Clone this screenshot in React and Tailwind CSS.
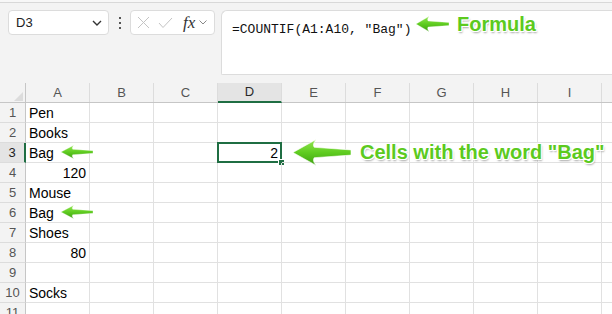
import React from "react";

function Arrow({ id, className }) {
  return (
    <svg className={className} viewBox="0 0 60 26" preserveAspectRatio="none">
      <defs>
        <linearGradient id={id} x1="0" y1="0" x2="0" y2="1">
          <stop offset="0" stopColor="#93e552" />
          <stop offset="0.5" stopColor="#5fcc20" />
          <stop offset="1" stopColor="#3e9f12" />
        </linearGradient>
      </defs>
      <path
        d="M0 13 L24 0.5 C21 4 20.5 6 22 8 L60 10.5 L60 15.5 L22 18 C20.5 20 21 22 24 25.5 Z"
        fill={`url(#${id})`}
        stroke="#ffffff"
        strokeWidth="0.6"
      />
    </svg>
  );
}

const cols = ["A", "B", "C", "D", "E", "F", "G", "H", "I", "J"];
const data = {
  1: { A: ["Pen", "l"] },
  2: { A: ["Books", "l"] },
  3: { A: ["Bag", "l"], D: ["2", "r"] },
  4: { A: ["120", "r"] },
  5: { A: ["Mouse", "l"] },
  6: { A: ["Bag", "l"] },
  7: { A: ["Shoes", "l"] },
  8: { A: ["80", "r"] },
  9: {},
  10: { A: ["Socks", "l"] },
  11: {},
};

const shadow =
  "[text-shadow:0_0_1px_#fff,1px_1px_0_#fff,-1px_-1px_0_#fff,1px_-1px_0_#fff,-1px_1px_0_#fff,0_1px_0_#fff,0_-1px_0_#fff,1px_0_0_#fff,-1px_0_0_#fff,1px_2px_2px_rgba(0,0,0,0.35)]";

export default function App() {
  const rows = [1, 2, 3, 4, 5, 6, 7, 8, 9, 10, 11];
  return (
    <div className="relative w-[612px] h-[314px] overflow-hidden bg-white font-['Liberation_Sans',Arial,sans-serif] text-black">
      {/* top strip */}
      <div className="h-[2px] bg-[#f7f7f7]" />
      <div className="h-[81px] bg-[#f3f3f3] border-t border-[#d8d8d8] pt-[7px] pl-[8px] flex items-start">
        {/* name box */}
        <div className="w-[101px] h-[25px] bg-white border border-[#dcdcdc] rounded-[4px] flex items-center pl-[7px] pr-[6px]">
          <span className="text-[13px] text-[#222] flex-1">D3</span>
          <svg width="10" height="6" viewBox="0 0 10 6" className="mt-[1px]">
            <path d="M1 1 L5 5 L9 1" fill="none" stroke="#333" strokeWidth="1.4" />
          </svg>
        </div>
        {/* dots */}
        <div className="w-[21px] h-[25px] flex flex-col items-center justify-center gap-[3px]">
          <div className="w-[2px] h-[2px] bg-[#555]" />
          <div className="w-[2px] h-[2px] bg-[#555]" />
          <div className="w-[2px] h-[2px] bg-[#555]" />
        </div>
        {/* fx box */}
        <div className="w-[85px] h-[25px] bg-white border border-[#dcdcdc] rounded-[4px] flex items-center pl-[6px]">
          <svg width="13" height="13" viewBox="0 0 13 13">
            <path d="M1 1 L12 12 M12 1 L1 12" stroke="#c4c4c4" strokeWidth="1" fill="none" />
          </svg>
          <svg width="15" height="12" viewBox="0 0 15 12" className="ml-[8px]">
            <path d="M1 6 L5 10.5 L14 1" stroke="#c4c4c4" strokeWidth="1" fill="none" />
          </svg>
          <span className="ml-[10px] font-['Liberation_Serif',serif] italic text-[17px] leading-none text-[#333]">fx</span>
          <svg width="8" height="5" viewBox="0 0 8 5" className="ml-[4px]">
            <path d="M0.5 0.5 L4 4 L7.5 0.5" stroke="#888" strokeWidth="1" fill="none" />
          </svg>
        </div>
        {/* formula input */}
        <div className="ml-[6px] flex-1 h-[65px] bg-white border-l border-t border-b border-[#dcdcdc] rounded-tl-[6px] rounded-bl-[2px] pl-[10px] pt-[5px]">
          <span className="font-['Liberation_Mono',monospace] text-[13px] leading-[18px] text-[#111]">
            =COUNTIF(A1:A10, "Bag")
          </span>
        </div>
      </div>

      {/* column header */}
      <div className="flex h-[20px] bg-[#f3f3f3] border-b border-[#c6c6c6]">
        <div className="w-[26px] shrink-0 border-r border-[#c6c6c6] flex items-end justify-end pr-[2px] pb-[1px]">
          <svg width="9" height="9" viewBox="0 0 9 9">
            <path d="M9 0 L9 9 L0 9 Z" fill="#dcdcdc" />
          </svg>
        </div>
        {cols.map((c) => (
          <div
            key={c}
            className={
              c === "D"
                ? "w-[64px] shrink-0 bg-[#e4e4e4] border-r border-[#dcdcdc] border-b-2 border-b-[#1f6e43] -mb-[1px] flex items-center justify-center text-[13px] text-[#2a2a2a]"
                : "w-[64px] shrink-0 border-r border-[#dcdcdc] flex items-center justify-center text-[13px] text-[#555]"
            }
          >
            {c === "J" ? "" : c}
          </div>
        ))}
      </div>

      {/* rows */}
      {rows.map((r) => (
        <div key={r} className="flex h-[20px]">
          <div
            className={
              r === 3
                ? "w-[26px] shrink-0 bg-[#e4e4e4] border-r-2 border-[#1f6e43] border-b border-b-[#dcdcdc] flex items-center justify-center text-[13px] text-[#222]"
                : "w-[26px] shrink-0 bg-[#f3f3f3] border-r border-[#c6c6c6] border-b border-b-[#dcdcdc] flex items-center justify-center text-[13px] text-[#555]"
            }
          >
            {r}
          </div>
          {cols.map((c) => {
            const v = data[r] && data[r][c];
            const sel = r === 3 && c === "D";
            return (
              <div
                key={c}
                className={
                  "relative w-[64px] shrink-0 border-r border-b border-[#e1e1e1] flex items-center text-[14px] leading-none " +
                  (v && v[1] === "r" ? "justify-end pr-[3px]" : "pl-[3px]")
                }
              >
                {v ? v[0] : ""}
                {sel && (
                  <>
                    <div className="absolute -left-[1px] -top-[1px] w-[65px] h-[21px] border-2 border-[#1f6e43]" />
                    <div className="absolute -right-[4px] -bottom-[4px] w-[7px] h-[7px] bg-[#1f6e43] border border-white" />
                  </>
                )}
              </div>
            );
          })}
        </div>
      ))}

      {/* annotations */}
      <Arrow id="g1" className="absolute left-[416px] top-[16px] w-[33px] h-[16px]" />
      <div className={"absolute left-[457px] top-[12px] text-[20px] leading-[24px] font-bold text-[#5cca1e] " + shadow}>
        Formula
      </div>

      <Arrow id="g2" className="absolute left-[61px] top-[145px] w-[32px] h-[14px]" />
      <Arrow id="g3" className="absolute left-[61px] top-[205px] w-[32px] h-[14px]" />
      <Arrow id="g4" className="absolute left-[293px] top-[139px] w-[58px] h-[27px]" />
      <div className={"absolute left-[360px] top-[140px] text-[20px] leading-[24px] font-bold text-[#5cca1e] whitespace-nowrap " + shadow}>
        Cells with the word "Bag"
      </div>
    </div>
  );
}
